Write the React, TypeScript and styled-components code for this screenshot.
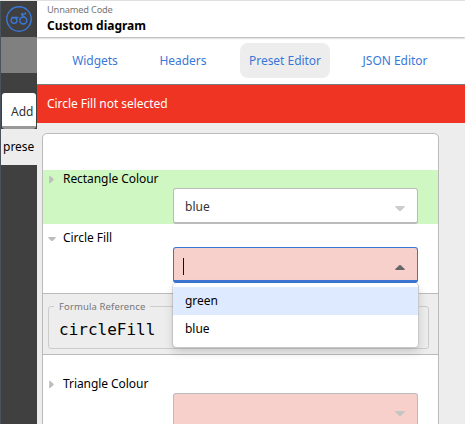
import React from "react";
import styled, { createGlobalStyle, css } from "styled-components";

const GlobalStyle = createGlobalStyle`
  * { box-sizing: border-box; }
  html, body { margin: 0; padding: 0; overflow: hidden; }
  body {
    font-family: "Noto Sans", "Open Sans", sans-serif;
    font-size: 12px;
    color: #000;
    background: #ededed;
  }
`;

const Shell = styled.div`
  display: flex;
  width: 465px;
  height: 424px;
  overflow: hidden;
  border-top: 1px solid #e0e0e0;
`;

const Sidebar = styled.aside`
  width: 37px;
  flex: none;
  display: flex;
  flex-direction: column;
  background: #404040;
  border-left: 1px solid #48535e;
  overflow: hidden;
`;

const Logo = styled.div`
  height: 36px;
  flex: none;
  padding: 4px 0 0 4px;
  svg { display: block; }
`;

const SidebarBlock = styled.div`
  height: 36px;
  flex: none;
  background: #808080;
`;

const AddButton = styled.button`
  height: 36px;
  width: 34px;
  flex: none;
  margin: 20px 0 0 1px;
  padding: 3px 0 0 9px;
  border: 0;
  border-bottom: 3px solid #999;
  border-radius: 3px;
  background: #fff;
  color: #333;
  font: inherit;
  font-size: 12px;
  text-align: left;
  white-space: nowrap;
`;

const SidebarItem = styled.div`
  height: 36px;
  flex: none;
  padding-left: 2px;
  line-height: 35px;
  background: #ededed;
`;

const Main = styled.main`
  flex: 1;
  min-width: 0;
  display: flex;
  flex-direction: column;
`;

const Header = styled.header`
  height: 36px;
  flex: none;
  padding-left: 10px;
  background: #fff;
  box-shadow: 0 1px 2px rgba(0, 0, 0, 0.35);
  z-index: 1;
`;

const Overline = styled.div`
  height: 16px;
  font-size: 9.3px;
  letter-spacing: -0.2px;
  line-height: 17px;
  color: #777;
`;

const Title = styled.h1`
  margin: 0;
  font-size: 12px;
  line-height: 17px;
  font-weight: 700;
`;

const Tabs = styled.nav`
  display: flex;
  flex: none;
  height: 48px;
  padding: 6px 0 0 27px;
  gap: 17px;
  background: #fff;
  border-bottom: 1px solid #7a7a7a;
`;

const Tab = styled.a<{ $width: number; $active?: boolean }>`
  width: ${(p) => p.$width}px;
  height: 35px;
  flex: none;
  line-height: 35px;
  text-align: center;
  color: #3a78d8;
  letter-spacing: -0.03px;
  border-radius: 8px;
  background: ${(p) => (p.$active ? "#ededed" : "transparent")};
`;

const ErrorBar = styled.div`
  height: 38px;
  flex: none;
  padding-left: 10px;
  line-height: 37px;
  color: #fff;
  letter-spacing: -0.04px;
  background: #ef3423;
`;

const Panel = styled.section`
  width: 397px;
  height: 330px;
  flex: none;
  margin: 10px 0 0 5px;
  padding-top: 36px;
  background: #fff;
  border: 1px solid #bbb;
  border-radius: 5px;
`;

const Property = styled.div<{ $height: number; $top?: number; $set?: boolean }>`
  height: ${(p) => p.$height}px;
  padding-top: ${(p) => p.$top ?? 0}px;
  background: ${(p) => (p.$set ? "#cff7c2" : "transparent")};
`;

const PropertyLabel = styled.div`
  display: flex;
  align-items: flex-start;
  height: 18px;
  padding-left: 5px;
  line-height: 17px;
  letter-spacing: -0.06px;
`;

const Disclosure = styled.span`
  display: flex;
  align-items: center;
  width: 15px;
  height: 18px;
`;

const Select = styled.div<{ $invalid?: boolean; $open?: boolean }>`
  position: relative;
  display: flex;
  align-items: center;
  justify-content: space-between;
  width: 245px;
  height: 36px;
  margin-left: 130px;
  padding: 2px 12px 0 11px;
  color: #333;
  background: ${(p) => (p.$invalid ? "#f7d0cb" : "#fff")};
  border: 1px solid #bbb;
  border-bottom-width: 2px;
  border-radius: 3px;
  ${(p) =>
    p.$open &&
    css`
      border-color: #3c76d4;
      border-bottom-width: 3px;
      padding-left: 9px;
    `}
`;

const Caret = styled.span`
  width: 1px;
  height: 17px;
  margin-top: 3px;
  background: #111;
`;

const Arrow = styled.svg`
  display: block;
  margin-top: 5px;
`;

const Menu = styled.ul`
  position: absolute;
  top: 35px;
  left: -1px;
  width: 246px;
  height: 65px;
  margin: 0;
  padding: 4px 0;
  list-style: none;
  color: #000;
  background: #fff;
  border: solid #c8c8c8;
  border-width: 0 1px 1px 0;
  border-radius: 4px;
  box-shadow: 0 4px 10px rgba(0, 0, 0, 0.15), -1px 0 1px rgba(0, 0, 0, 0.12);
  z-index: 2;
`;

const Option = styled.li<{ $focused?: boolean }>`
  height: 28px;
  padding-left: 12px;
  line-height: 27px;
  letter-spacing: -0.05px;
  background: ${(p) => (p.$focused ? "#deeaff" : "transparent")};
`;

const Details = styled.div`
  height: 62px;
  padding: 6px 9px 0 5px;
  background: #ededed;
  border: solid #bbb;
  border-width: 1px 0;
`;

const Fieldset = styled.fieldset`
  height: 49px;
  margin: 0;
  padding: 0 0 0 10px;
  border: 1px solid #ccc;
  border-radius: 3px;
  min-width: 0;
`;

const Legend = styled.legend`
  height: 13px;
  padding: 0 5px;
  margin-left: -5px;
  font-size: 9.5px;
  line-height: 13px;
  letter-spacing: 0.12px;
  color: #777;
`;

const Formula = styled.code`
  display: block;
  padding-top: 3px;
  font: 16px/28px "DejaVu Sans Mono", monospace;
`;

function BikeLogo() {
  return (
    <svg width="28" height="28" viewBox="0 0 28 28" fill="none" stroke="#3879dc" strokeWidth="1.4">
      <circle cx="14" cy="14" r="12.2" />
      <circle cx="9" cy="15.5" r="2.9" />
      <circle cx="18.3" cy="15.5" r="3.5" />
      <path d="M6.5 12.5H13.5M16 8.9H20.3V7.4M16.2 9L19.8 12.4" />
    </svg>
  );
}

function DropArrow({ open, muted }: { open?: boolean; muted?: boolean }) {
  return (
    <Arrow width="10" height="6" viewBox="0 0 10 6">
      {open ? (
        <path d="M.3 5V4L4 .4Q5-.3 6 .4L9.7 4V5Z" fill="#666" />
      ) : (
        <path d="M.3 0V1L4 4.7Q5 5.4 6 4.7L9.7 1V0Z" fill={muted ? "#c5c5c2" : "#ccc"} />
      )}
    </Arrow>
  );
}

function Toggle({ expanded }: { expanded?: boolean }) {
  return (
    <Disclosure>
      <svg width="8" height="9" viewBox="0 0 8 9" fill="#bdbdbd">
        <path d={expanded ? "M.3 3H7.7V4L4.6 7H3.4L.3 4Z" : "M1.2 .7V8.2H2L5.6 5V4L2 .7Z"} />
      </svg>
    </Disclosure>
  );
}

export default function App() {
  return (
    <>
      <GlobalStyle />
      <Shell>
        <Sidebar>
          <Logo><BikeLogo /></Logo>
          <SidebarBlock />
          <AddButton>Add</AddButton>
          <SidebarItem>prese</SidebarItem>
        </Sidebar>
        <Main>
          <Header>
            <Overline>Unnamed Code</Overline>
            <Title>Custom diagram</Title>
          </Header>
          <Tabs>
            <Tab $width={62}>Widgets</Tab>
            <Tab $width={80}>Headers</Tab>
            <Tab $width={90} $active>Preset Editor</Tab>
            <Tab $width={96}>JSON Editor</Tab>
          </Tabs>
          <ErrorBar>Circle Fill not selected</ErrorBar>
          <Panel>
            <Property $height={54} $set>
              <PropertyLabel><Toggle />Rectangle Colour</PropertyLabel>
              <Select>blue<DropArrow /></Select>
            </Property>
            <Property $height={69} $top={5}>
              <PropertyLabel><Toggle expanded />Circle Fill</PropertyLabel>
              <Select $invalid $open>
                <Caret />
                <DropArrow open />
                <Menu>
                  <Option $focused>green</Option>
                  <Option>blue</Option>
                </Menu>
              </Select>
            </Property>
            <Details>
              <Fieldset>
                <Legend>Formula Reference</Legend>
                <Formula>circleFill</Formula>
              </Fieldset>
            </Details>
            <Property $height={74} $top={20}>
              <PropertyLabel><Toggle />Triangle Colour</PropertyLabel>
              <Select $invalid><span /><DropArrow muted /></Select>
            </Property>
          </Panel>
        </Main>
      </Shell>
    </>
  );
}
